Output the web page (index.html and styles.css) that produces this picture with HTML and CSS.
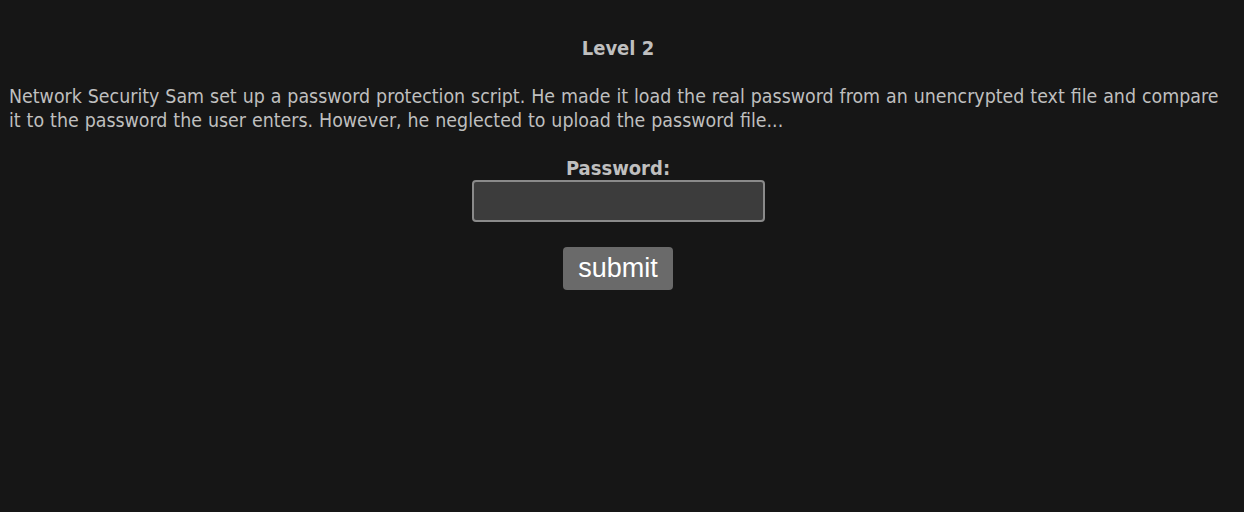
FILE: index.html
```html
<!DOCTYPE html>
<html>
<head>
<meta charset="utf-8">
<link rel="stylesheet" href="styles.css">
</head>
<body>
<h1 class="title">Level 2</h1>
<p class="intro">Network Security Sam set up a password protection script. He made it load the real password from an unencrypted text file and compare it to the password the user enters. However, he neglected to upload the password file...</p>
<form class="login">
  <label class="label" for="pw">Password:</label>
  <input class="field" id="pw" type="password">
  <button class="submit" type="button">submit</button>
</form>
</body>
</html>
```
FILE: styles.css
```css
html, body {
  background: #161616;
}
body {
  margin: 8px 16px 8px 8px;
  color: #bfbfbf;
  font-family: "DejaVu Sans Condensed", "DejaVu Sans", sans-serif;
  font-size: 19.4px;
  word-spacing: 0.4px;
}
.title {
  font-size: 20px;
  font-weight: bold;
  text-align: center;
  margin: 28px 0 0 0;
  line-height: 24px;
  word-spacing: 0;
}
.intro {
  margin: 25px 0 0 0;
  padding-left: 1px;
  line-height: 24px;
}
.login {
  display: flex;
  flex-direction: column;
  align-items: center;
  margin-top: 23px;
}
.label {
  font-size: 20px;
  font-weight: bold;
  line-height: 24px;
}
.field {
  box-sizing: border-box;
  width: 293px;
  height: 42px;
  background: #3c3c3c;
  border: 2px solid #8a8a8a;
  border-radius: 4px;
  color: #ddd;
}
.submit {
  margin-top: 25px;
  width: 110px;
  height: 43px;
  background: #6a6a6a;
  color: #fff;
  border: none;
  border-radius: 4px;
  font-family: "Liberation Sans", Arial, sans-serif;
  font-size: 27px;
  padding: 0;
  word-spacing: 0;
}
```
